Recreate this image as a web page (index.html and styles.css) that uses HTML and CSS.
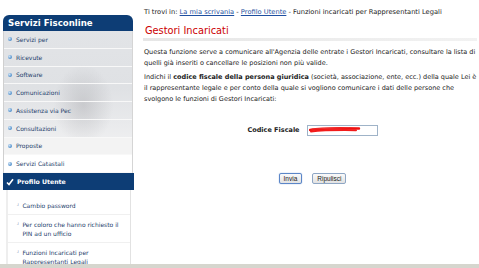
FILE: index.html
```html
<!DOCTYPE html>
<html lang="it">
<head>
    <meta charset="UTF-8">
    <title>Servizi Fisconline - Gestori Incaricati</title>
    <link rel="stylesheet" href="styles.css">
</head>
<body>

    <div class="page">
        <div class="sidebar">
            <div class="side-title">Servizi Fisconline</div>
            <ul class="menu">
                <li><span class="dot"></span>Servizi per</li>
                <li><span class="dot"></span>Ricevute</li>
                <li><span class="dot"></span>Software</li>
                <li><span class="dot"></span>Comunicazioni</li>
                <li><span class="dot"></span>Assistenza via Pec</li>
                <li><span class="dot"></span>Consultazioni</li>
                <li class="fade"><span class="dot"></span>Proposte</li>
                <li class="light"><span class="dot"></span>Servizi Catastali</li>
            </ul>
            <div class="active">
                <svg width="8" height="8" viewBox="0 0 8 8"><path d="M1 4.5 L3 6.5 L7 1.2" fill="none" stroke="#fff" stroke-width="1.6"/></svg>
                Profilo Utente
            </div>
            <ul class="submenu">
                <li><span class="arrow">&#x2518;</span><span>Cambio password</span></li>
                <li><span class="arrow">&#x2518;</span><span>Per coloro che hanno richiesto il PIN ad un ufficio</span></li>
                <li><span class="arrow">&#x2518;</span><span>Funzioni Incaricati per Rappresentanti Legali</span></li>
            </ul>
        </div>

        <div class="content">
            <p class="crumbs">Ti trovi in: <a href="#">La mia scrivania</a> - <a href="#">Profilo Utente</a> - Funzioni incaricati per Rappresentanti Legali</p>
            <h1>Gestori Incaricati</h1>
            <p>Questa funzione serve a comunicare all'Agenzia delle entrate i Gestori Incaricati, consultare la lista di quelli già inseriti o cancellare le posizioni non più valide.</p>
            <p>Indichi il <b>codice fiscale della persona giuridica</b> (società, associazione, ente, ecc.) della quale Lei è il rappresentante legale e per conto della quale si vogliono comunicare i dati delle persone che svolgono le funzioni di Gestori Incaricati:</p>

            <form class="cf-form">
                <div class="cf-row">
                    <label for="cf">Codice Fiscale</label>
                    <div class="cf-input">
                        <input type="text" id="cf">
                        <svg class="redact" width="52" height="8" viewBox="0 0 52 8">
                            <path d="M1 4 C12 2, 30 2, 50 2.5" stroke="#ee1111" stroke-width="2.4" fill="none" stroke-linecap="round"/>
                            <path d="M2 5.5 C15 4, 32 4, 47 4.2" stroke="#f21a1a" stroke-width="2" fill="none" stroke-linecap="round"/>
                            <path d="M3 3 L40 1.5" stroke="#f03030" stroke-width="1.2" fill="none" stroke-linecap="round"/>
                        </svg>
                    </div>
                </div>
                <div class="buttons">
                    <button type="button" class="primary">Invia</button>
                    <button type="reset">Ripulisci</button>
                </div>
            </form>
        </div>
    </div>
    <div class="footer"></div>

</body>
</html>
```

FILE: styles.css
```css
body {
    margin: 0;
    font-family: "DejaVu Sans", Verdana, sans-serif;
    background: #fff;
    color: #222;
    overflow: hidden;
}
.page {
    display: flex;
    height: 264px;
    overflow: hidden;
}
.sidebar {
    width: 130px;
    margin: 15px 0 0 3px;
    flex-shrink: 0;
}
.side-title {
    background: #0d3d75;
    color: #fff;
    font-weight: bold;
    font-size: 8.6px;
    height: 16px;
    line-height: 16px;
    padding-left: 5px;
    border-radius: 6px 6px 0 0;
}
.menu {
    list-style: none;
    margin: 0;
    padding: 0;
    border-left: 1px solid #d0d0d0;
    border-right: 1px solid #d5d5d5;
    background:
        radial-gradient(ellipse 30px 40px at 62% 52%, rgba(140, 140, 145, 0.3), rgba(140, 140, 145, 0) 100%),
        linear-gradient(180deg, #e2e4e7 0%, #dfe1e4 40%, #e9eaec 65%, #f7f7f7 100%);
}
.menu li {
    height: 16.75px;
    border-bottom: 1px solid #f8f8f8;
    font-size: 6px;
    color: #1d3d6b;
    padding-left: 4px;
    display: flex;
    align-items: center;
}
.menu li.fade {
    background: #f3f3f3;
}
.menu li.light {
    background: #fff;
}
.dot {
    width: 4px;
    height: 4px;
    border-radius: 50%;
    background: radial-gradient(circle at 35% 35%, #cfe3f5, #4f8fcc 70%);
    margin-right: 4px;
}
.active {
    background: #0d3d75;
    color: #fff;
    font-weight: bold;
    font-size: 6.2px;
    height: 17px;
    display: flex;
    align-items: center;
    gap: 3px;
    padding-left: 3px;
    margin-right: -1px;
}
.submenu {
    list-style: none;
    margin: 0 2px 0 3px;
    padding: 6px 0 0;
    border-left: 2px solid #eeeeee;
    border-right: 1px solid #e2e2e2;
}
.submenu li {
    display: flex;
    font-size: 6px;
    line-height: 9px;
    color: #1d3d6b;
    padding: 5px 4px 4px 9px;
    border-bottom: 1px solid #f0f0f0;
}
.arrow {
    font-size: 4px;
    color: #5d7ea6;
    margin-right: 3px;
    flex-shrink: 0;
}
.content {
    flex: 1;
    padding: 7px 2px 0 10px;
    font-size: 6.5px;
    line-height: 11px;
}
.content p {
    margin: 0 0 3px 1px;
}
.crumbs {
    font-size: 6.7px;
}
.crumbs a {
    color: #1e4fa0;
}
h1 {
    color: #cc0000;
    font-weight: normal;
    font-size: 9.8px;
    margin: 7px 0 6px;
    padding: 0 0 2px 2px;
    border-bottom: 3px solid;
    border-image: linear-gradient(90deg, #e6e6e6, #f2f2f2) 1;
}
.cf-form {
    margin-top: 20px;
}
.cf-row {
    display: flex;
    justify-content: center;
    align-items: center;
    gap: 7px;
    margin-left: 5px;
}
.cf-row label {
    font-weight: bold;
}
.cf-input {
    position: relative;
}
.cf-input input {
    width: 71px;
    height: 11px;
    box-sizing: border-box;
    border: 1px solid #9fb3c8;
    padding: 0;
    display: block;
}
.redact {
    position: absolute;
    left: 2px;
    top: 1px;
}
.buttons {
    display: flex;
    justify-content: center;
    gap: 10px;
    margin-top: 37px;
    margin-left: 5px;
}
.buttons button {
    font-family: "Liberation Sans", Arial, sans-serif;
    font-size: 6.5px;
    padding: 1px 4px;
    height: 11px;
    line-height: 8px;
    background: linear-gradient(#fafafa, #e2e2e2);
    border: 1px solid #8ea6c4;
    border-radius: 2px;
    color: #222;
}
.buttons button.primary {
    border-color: #5b86c8;
    box-shadow: 0 0 1px #5b86c8;
}
.footer {
    height: 4px;
    background: #d6d6ce;
}
```
